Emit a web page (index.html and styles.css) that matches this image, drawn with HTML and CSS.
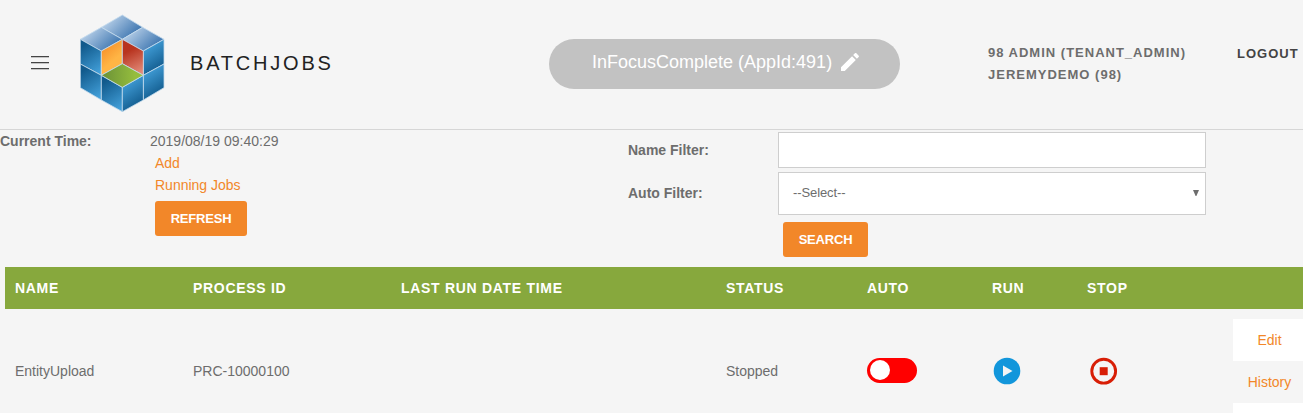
FILE: index.html
```
<!DOCTYPE html>
<html lang="en">

<head>
    <meta charset="UTF-8">
    <meta name="viewport" content="width=device-width, initial-scale=1.0">
    <title>BatchJobs</title>
    <link rel="stylesheet" href="styles.css">
</head>

<body>
    <header class="header">
        <div class="menu-icon"><span></span><span></span><span></span></div>

        <svg class="logo" width="86" height="98" viewBox="30 27 258 294">
            <defs>
                <linearGradient id="top" x1="0" y1="0.2" x2="1" y2="0.8">
                    <stop offset="0.1" stop-color="#b7cfe8" />
                    <stop offset="1" stop-color="#2c69a8" />
                </linearGradient>
                <linearGradient id="left" x1="0.3" y1="0" x2="0.7" y2="1">
                    <stop offset="0.1" stop-color="#115a8c" />
                    <stop offset="1" stop-color="#429fd9" />
                </linearGradient>
                <linearGradient id="right" x1="0.3" y1="0" x2="0.7" y2="1">
                    <stop offset="0.1" stop-color="#429fd9" />
                    <stop offset="0.9" stop-color="#115a8c" />
                </linearGradient>
                <linearGradient id="orange" x1="0" y1="0" x2="0.5" y2="1">
                    <stop offset="0.1" stop-color="#f58a25" />
                    <stop offset="0.7" stop-color="#ffb545" />
                </linearGradient>
                <linearGradient id="red" x1="0.3" y1="0" x2="0.6" y2="1">
                    <stop offset="0.3" stop-color="#b8341f" />
                    <stop offset="1" stop-color="#e28a78" />
                </linearGradient>
                <linearGradient id="green" x1="0" y1="0" x2="1" y2="0">
                    <stop offset="0.1" stop-color="#6f9638" />
                    <stop offset="0.8" stop-color="#95bd3d" />
                </linearGradient>
            </defs>
            <g stroke="#c5dcee" stroke-width="2.4" stroke-linejoin="round">
                <path fill="url(#top)" d="M157 30L218 67L157 103L94 67Z" />
                <path fill="url(#top)" d="M94 67L157 103L94 138L31 103Z" />
                <path fill="url(#top)" d="M218 67L282 103L220 138L157 103Z" />
                <path fill="url(#left)" d="M31 103L94 138V211L31 177Z" />
                <path fill="url(#left)" d="M31 177L94 211V285L31 248Z" />
                <path fill="url(#left)" d="M94 211L157 247V320L94 285Z" />
                <path fill="url(#right)" d="M282 103L220 138V211L282 177Z" />
                <path fill="url(#right)" d="M282 177L220 211V285L282 248Z" />
                <path fill="url(#right)" d="M220 211L157 247V320L220 285Z" />
                <path fill="url(#orange)" d="M157 103V176L94 211V138Z" />
                <path fill="url(#red)" d="M157 103L220 138V211L157 176Z" />
                <path fill="url(#green)" d="M157 176L220 211L157 247L94 211Z" />
            </g>
        </svg>

        <h1 class="title">BATCHJOBS</h1>

        <div class="app-pill">
            <span>InFocusComplete (AppId:491)</span>
            <svg class="pencil" width="24" height="24" viewBox="0 0 24 24" fill="#fff">
                <path d="M3 17.25V21h3.75L17.81 9.94l-3.75-3.75L3 17.25zM20.71 7.04c.39-.39.39-1.02 0-1.41l-2.34-2.34c-.39-.39-1.02-.39-1.41 0l-1.83 1.83 3.75 3.75 1.83-1.83z" />
            </svg>
        </div>

        <div class="user">98 ADMIN (TENANT_ADMIN)<br>JEREMYDEMO (98)</div>
        <a class="logout">LOGOUT</a>
    </header>

    <main>
        <div class="filters">
            <div class="label current-label">Current Time:</div>
            <div class="current">
                <div>2019/08/19 09:40:29</div>
                <a class="link">Add</a>
                <a class="link">Running Jobs</a>
                <button class="btn btn-refresh">REFRESH</button>
            </div>
            <div class="search">
                <label class="label" for="name">Name Filter:</label>
                <input class="field" id="name" type="text">
                <label class="label label-auto" for="auto">Auto Filter:</label>
                <div class="field select" id="auto">
                    <span>--Select--</span>
                    <svg width="6" height="6" viewBox="0 0 6 6" fill="#6d6d6d">
                        <path d="M0 0H6L3.4 6H2.6Z" />
                    </svg>
                </div>
                <button class="btn btn-search">SEARCH</button>
            </div>
        </div>

        <table class="jobs">
            <thead>
                <tr>
                    <th class="col-name">NAME</th>
                    <th class="col-process">PROCESS ID</th>
                    <th class="col-last">LAST RUN DATE TIME</th>
                    <th class="col-status">STATUS</th>
                    <th class="col-auto">AUTO</th>
                    <th class="col-run">RUN</th>
                    <th class="col-stop">STOP</th>
                    <th></th>
                </tr>
            </thead>
            <tbody>
                <tr>
                    <td>EntityUpload</td>
                    <td>PRC-10000100</td>
                    <td></td>
                    <td>Stopped</td>
                    <td><div class="toggle"><span></span></div></td>
                    <td>
                        <svg class="icon" width="28" height="28" viewBox="0 0 28 28">
                            <circle cx="14" cy="14" r="13.3" fill="#1296db" />
                            <path d="M10 8.5L19.5 14L10 19.5Z" fill="#f4f4f4" />
                        </svg>
                    </td>
                    <td>
                        <svg class="icon icon-stop" width="28" height="28" viewBox="0 0 28 28">
                            <circle cx="13.7" cy="14.2" r="11.9" fill="none" stroke="#d81e06" stroke-width="2.9" />
                            <path d="M9.7 10.2H17.7V18.2H9.7Z" fill="#d81e06" />
                        </svg>
                    </td>
                    <td class="actions">
                        <a>Edit</a>
                        <a>History</a>
                        <a></a>
                    </td>
                </tr>
            </tbody>
        </table>
    </main>
</body>

</html>
```
FILE: styles.css
```
* {
    box-sizing: border-box;
}

body {
    margin: 0;
    background: #f5f5f5;
    color: #6d6d6d;
    font-family: "Liberation Sans", Arial, sans-serif;
    font-size: 14px;
    line-height: 22px;
}

.header {
    display: flex;
    align-items: flex-start;
    height: 130px;
    border-bottom: 1px solid #d6d6d6;
}

.menu-icon {
    display: flex;
    flex-direction: column;
    gap: 5px;
    width: 18px;
    margin: 56px 31px 0 31px;
}

.menu-icon span {
    height: 1px;
    background: #444;
    box-shadow: 0 1px 0 #c4c4c4;
}

.logo {
    flex: none;
    margin-top: 14px;
}

.title {
    width: 359px;
    margin: 52px 0 0 24px;
    color: #222;
    font-size: 20px;
    font-weight: normal;
    letter-spacing: 2.8px;
}

.app-pill {
    display: flex;
    width: 351px;
    height: 50px;
    margin-top: 39px;
    padding: 12px 0 0 43px;
    border-radius: 25px;
    background: #c2c2c2;
    color: #fff;
    font-size: 18px;
}

.pencil {
    margin: -1px 0 0 6px;
}

.user {
    width: 249px;
    margin: 42px 0 0 88px;
    font-size: 13px;
    font-weight: bold;
    letter-spacing: 1px;
}

.logout {
    margin-top: 43px;
    color: #444;
    font-size: 13px;
    font-weight: bold;
    letter-spacing: 1px;
}

.filters {
    display: flex;
    height: 137px;
}

.label {
    font-weight: bold;
}

.label-auto {
    padding-bottom: 2px;
}

.current-label {
    width: 150px;
}

.current {
    display: flex;
    flex-direction: column;
    align-items: flex-start;
    width: 478px;
}

.link {
    margin-left: 5px;
    color: #f28729;
}

.btn {
    height: 35px;
    margin-left: 5px;
    padding: 0;
    border: 0;
    border-radius: 3px;
    background: #f28729;
    color: #fff;
    font-family: inherit;
    font-size: 13px;
    font-weight: bold;
    letter-spacing: -0.2px;
}

.btn-refresh {
    width: 92px;
    margin-top: 5px;
}

.search {
    display: grid;
    grid-template-columns: 150px 428px;
    grid-template-rows: 36px 43px 35px;
    row-gap: 4px;
    align-items: center;
    align-content: start;
    padding-top: 2px;
}

.field {
    width: 100%;
    height: 100%;
    border: 1px solid #cecece;
    background: #fff;
}

.select {
    display: flex;
    justify-content: space-between;
    align-items: center;
    padding: 0 6px 1px 14px;
    font-size: 13px;
    letter-spacing: -0.1px;
}

.btn-search {
    grid-column: 2;
    align-self: start;
    width: 85px;
    margin-top: 3px;
}

.jobs {
    width: 1298px;
    margin-left: 5px;
    table-layout: fixed;
    border-collapse: collapse;
}

.jobs th {
    height: 42px;
    padding: 0 0 0 10px;
    background: #87a83d;
    color: #fff;
    text-align: left;
    letter-spacing: 0.7px;
}

.jobs td {
    height: 104px;
    padding: 20px 0 0 10px;
}

.col-name {
    width: 178px;
}

.col-process {
    width: 208px;
}

.col-last {
    width: 325px;
}

.col-status {
    width: 141px;
}

.col-auto {
    width: 125px;
}

.col-run {
    width: 95px;
}

.col-stop {
    width: 151px;
}

.toggle {
    width: 50px;
    height: 25px;
    margin-bottom: 2px;
    padding: 2px 3px;
    border-radius: 13px;
    background: #f00;
}

.toggle span {
    display: block;
    width: 20px;
    height: 20px;
    border-radius: 50%;
    background: #fff;
}

.icon {
    display: block;
    margin-left: 1px;
}

.icon-stop {
    margin-left: 3px;
}

.jobs .actions {
    padding: 10px 0 0 5px;
    vertical-align: top;
}

.actions a {
    display: block;
    height: 42px;
    padding-left: 3px;
    color: #f28729;
    line-height: 42px;
    text-align: center;
}

.actions a:nth-child(odd) {
    background: #fff;
}

.actions a:last-child {
    height: 10px;
}
```
